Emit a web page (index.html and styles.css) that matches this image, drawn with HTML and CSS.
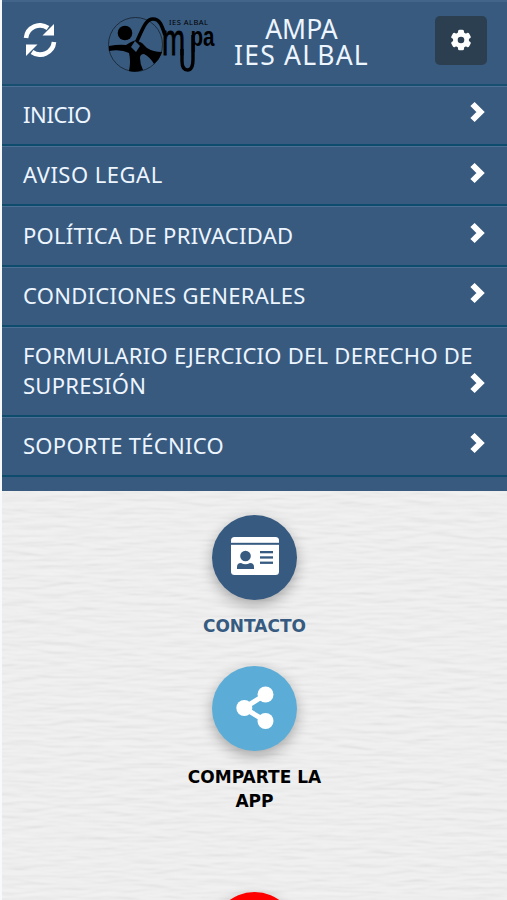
FILE: index.html
```
<!DOCTYPE html>
<html lang="es">
<head>
    <meta charset="UTF-8">
    <meta name="viewport" content="width=device-width, initial-scale=1.0">
    <title>AMPA IES ALBAL</title>
    <link rel="stylesheet" href="styles.css">
</head>
<body>
    <div class="page">
        <svg class="paper" width="505" height="900" aria-hidden="true">
            <filter id="paper" x="0" y="0" width="100%" height="100%" color-interpolation-filters="sRGB">
                <feTurbulence type="fractalNoise" baseFrequency="0.03 0.18" numOctaves="2" seed="8" result="noise"/>
                <feDiffuseLighting in="noise" surfaceScale="0.45" lighting-color="#f1f1f1">
                    <feDistantLight azimuth="90" elevation="80"/>
                </feDiffuseLighting>
            </filter>
            <rect width="505" height="900" filter="url(#paper)"/>
        </svg>

        <div class="top">
            <header class="header">
                <a href="#" class="refresh" aria-label="Actualizar">
                    <svg width="34" height="34" viewBox="0 0 34 34">
                        <path d="M3 15A14 14 0 0 1 25 5" fill="none" stroke="#fff" stroke-width="4.6"/>
                        <path d="M31 1V12.5H19.5Z" fill="#fff"/>
                        <path d="M31 19A14 14 0 0 1 9 29" fill="none" stroke="#fff" stroke-width="4.6"/>
                        <path d="M3 33V21.5H14.5Z" fill="#fff"/>
                    </svg>
                </a>
                <div class="brand">
                    <svg class="logo" width="112" height="60" viewBox="0 0 112 60">
                        <circle cx="28.500" cy="29.500" r="27" fill="none" stroke="#15212d" stroke-width=".8"/>
                        <circle cx="18" cy="18" r="7.300"/>
                        <path d="M2 31Q12 29 19 30L24 27L29 25L35 28L40 33Q46 37 55 37Q53 44 47 49Q43 42 37 39Q33 39 33 43Q33 49 36 55Q29 58 22 56Q24 46 22 38Q14 34 2 36Z"/>
                        <path d="M28 26L33 31L29 37L24 32Z" fill="#385a7f"/>
                        <path d="M30 26C36 13 39 4 46 4C53 4 55 11 58 20" fill="none" stroke="#000" stroke-width="3.600"/>
                        <path d="M75 34V46Q75 55 80.500 55Q86 55 86 44V20" fill="none" stroke="#000" stroke-width="3.400"/>
                        <text class="logo-m" x="55" y="40" textLength="23" lengthAdjust="spacingAndGlyphs">m</text>
                        <text class="logo-pa" x="83.500" y="31" textLength="24" lengthAdjust="spacingAndGlyphs">pa</text>
                        <text class="logo-sub" x="62" y="10" textLength="39">IES ALBAL</text>
                    </svg>
                    <h1 class="title"><span>AMPA</span><br>IES ALBAL</h1>
                </div>
                <button class="settings" aria-label="Ajustes">
                    <svg width="22" height="22" viewBox="0 0 22 22">
                        <g fill="#fff">
                            <circle cx="11" cy="11" r="8"/>
                            <rect x="8" y="0.800" width="6" height="20.400" rx="1.500"/>
                            <rect x="8" y="0.800" width="6" height="20.400" rx="1.500" transform="rotate(60 11 11)"/>
                            <rect x="8" y="0.800" width="6" height="20.400" rx="1.500" transform="rotate(120 11 11)"/>
                        </g>
                        <circle cx="11" cy="11" r="3.300" fill="#2b3f50"/>
                    </svg>
                </button>
            </header>

            <nav class="menu">
                <a href="#" class="item narrow"><span>INICIO</span><svg class="chevron" viewBox="0 0 16 22"><path d="M2.500 3L10.500 11L2.500 19"/></svg></a>
                <a href="#" class="item wide"><span>AVISO LEGAL</span><svg class="chevron" viewBox="0 0 16 22"><path d="M2.500 3L10.500 11L2.500 19"/></svg></a>
                <a href="#" class="item"><span>POLÍTICA DE PRIVACIDAD</span><svg class="chevron" viewBox="0 0 16 22"><path d="M2.500 3L10.500 11L2.500 19"/></svg></a>
                <a href="#" class="item"><span>CONDICIONES GENERALES</span><svg class="chevron" viewBox="0 0 16 22"><path d="M2.500 3L10.500 11L2.500 19"/></svg></a>
                <a href="#" class="item"><span>FORMULARIO EJERCICIO DEL DERECHO DE<br>SUPRESIÓN</span><svg class="chevron" viewBox="0 0 16 22"><path d="M2.500 3L10.500 11L2.500 19"/></svg></a>
                <a href="#" class="item"><span>SOPORTE TÉCNICO</span><svg class="chevron" viewBox="0 0 16 22"><path d="M2.500 3L10.500 11L2.500 19"/></svg></a>
            </nav>
        </div>

        <main class="actions">
            <a href="#" class="action contact">
                <span class="circle">
                    <svg width="48" height="38" viewBox="0 0 48 38">
                        <rect width="48" height="38" rx="3.500" fill="#fff"/>
                        <g fill="#365a80">
                            <rect y="5.800" width="48" height="2"/>
                            <circle cx="14.500" cy="19" r="5.300"/>
                            <path d="M6 32V30Q6 26 10 26Q14.500 28.500 19 26Q23 26 23 30V32Z"/>
                            <rect x="29" y="14" width="13" height="2.300"/>
                            <rect x="29" y="19.300" width="13" height="2.300"/>
                            <rect x="29" y="24.600" width="13" height="2.300"/>
                        </g>
                    </svg>
                </span>
                <span class="label">CONTACTO</span>
            </a>
            <a href="#" class="action share">
                <span class="circle">
                    <svg width="38" height="44" viewBox="0 0 38 44">
                        <path d="M29.500 8.500L8 22L29.500 35" fill="none" stroke="#fff" stroke-width="5"/>
                        <g fill="#fff">
                            <circle cx="29.500" cy="8.500" r="8"/>
                            <circle cx="8.300" cy="22" r="8"/>
                            <circle cx="29.500" cy="35" r="8"/>
                        </g>
                    </svg>
                </span>
                <span class="label">COMPARTE LA<br>APP</span>
            </a>
            <a href="#" class="action alert" aria-label="Aviso">
                <span class="circle"></span>
            </a>
        </main>
    </div>
</body>
</html>
```
FILE: styles.css
```
* {
    box-sizing: border-box;
}
body {
    margin: 0;
    padding-left: 2px;
    height: 900px;
    overflow: hidden;
    background: #f8f9fa;
    font-family: Verdana, "Noto Sans", "DejaVu Sans", sans-serif;
}
a {
    color: inherit;
    text-decoration: none;
}
svg {
    display: block;
}
.page {
    position: relative;
    z-index: 0;
    height: 900px;
    overflow: hidden;
    background: #eee;
}
.paper {
    position: absolute;
    top: 0;
    left: 0;
    z-index: -1;
}
.top {
    height: 491px;
    background: #385a7f;
    color: #edf5ff;
}
.header {
    display: flex;
    align-items: flex-start;
    height: 86px;
    padding: 0 20.500px 0 21px;
    border-top: 2px solid #43658a;
    border-bottom: 2px solid #174f70;
}
.refresh {
    padding-top: 21px;
}
.brand {
    display: flex;
    gap: 13px;
    margin-left: 50px;
    padding-top: 13px;
}
.logo {
    overflow: visible;
}
.logo-m {
    font: 400 44px "Liberation Sans", sans-serif;
    stroke: #000;
    stroke-width: 0.900px;
}
.logo-pa {
    font: 700 28px "Liberation Sans", sans-serif;
}
.logo-sub {
    font: 7.500px "Noto Sans", sans-serif;
}
.title {
    width: 139px;
    margin: 1px 0 0;
    font-size: 26.500px;
    font-weight: 400;
    line-height: 26px;
    letter-spacing: 1.200px;
    text-align: center;
    white-space: nowrap;
}
.title span {
    letter-spacing: 0;
}
.settings {
    display: flex;
    align-items: center;
    justify-content: center;
    width: 52px;
    height: 49px;
    margin: 14px 0 0 auto;
    padding: 0 0 2px;
    border: 0;
    border-radius: 5px;
    background: #2b3f50;
}
.item {
    display: flex;
    align-items: flex-end;
    justify-content: space-between;
    padding: 13.200px 21px 14.250px;
    border-top: 1px solid #4d6f93;
    border-bottom: 2px solid #0d4c6c;
    font-size: 22px;
    line-height: 29.800px;
    letter-spacing: 0.270px;
    white-space: nowrap;
}
.item.narrow {
    letter-spacing: -0.350px;
}
.item.wide {
    letter-spacing: 0.500px;
}
.chevron {
    flex: none;
    width: 16px;
    height: 22px;
    margin: 0 0 6.500px -20px;
    fill: none;
    stroke: #fff;
    stroke-width: 6;
}
.actions {
    display: flex;
    flex-direction: column;
    align-items: center;
    padding-top: 24px;
}
.action {
    display: flex;
    flex-direction: column;
    align-items: center;
    color: #000;
}
.circle {
    display: flex;
    align-items: center;
    justify-content: center;
    width: 85px;
    height: 85px;
    border-radius: 50%;
    box-shadow: 0 5px 14px rgba(0, 0, 0, 0.3);
}
.label {
    margin-top: 14px;
    font-family: Verdana, "DejaVu Sans", sans-serif;
    font-size: 17px;
    font-weight: 700;
    line-height: 24px;
    text-align: center;
}
.contact {
    height: 151px;
    color: #365a80;
}
.contact .circle {
    background: #365a80;
    padding-bottom: 3px;
}
.share {
    height: 226px;
}
.share .circle {
    background: #5badd7;
    padding-bottom: 2px;
}
.alert .circle {
    background: #f00;
}
```
